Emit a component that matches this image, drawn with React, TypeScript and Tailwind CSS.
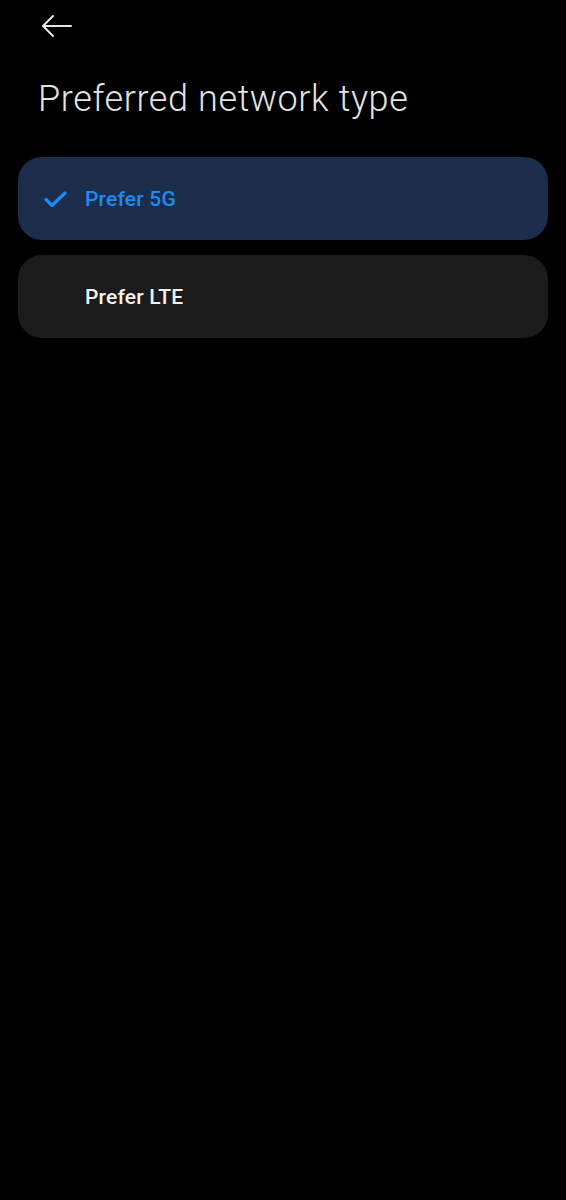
import React from "react";

export default function App() {
  return (
    <div className="min-h-[1200px] w-full bg-black" style={{ fontFamily: "Roboto, 'Noto Sans', sans-serif" }}>
      <div className="flex h-[52px] items-center pl-[41px]">
        <svg width="32" height="24" viewBox="0 0 32 24" fill="none" stroke="#e6e6e6" strokeWidth="2" strokeLinecap="round" strokeLinejoin="round">
          <path d="M30 12H3" />
          <path d="M12 2L2 12l10 10" />
        </svg>
      </div>
      <h1 className="mt-[24px] pl-[38px] text-[36px] font-light leading-[46px] tracking-[0.6px] text-[#e3e3e3]">
        Preferred network type
      </h1>
      <div className="mt-[35px] flex flex-col gap-[15px] px-[18px]">
        <div className="flex h-[83px] items-center rounded-[24px] bg-[#1b2d4a] pl-[26px] pt-[2px]">
          <svg width="23" height="17" viewBox="0 0 23 17" fill="none" stroke="#1e8bf3" strokeWidth="3.2" strokeLinecap="round" strokeLinejoin="round">
            <path d="M2 8.5l6 6L21 2" />
          </svg>
          <span className="ml-[18px] text-[21px] font-medium tracking-[0.2px] text-[#1e8bf3]">Prefer 5G</span>
        </div>
        <div className="flex h-[83px] items-center rounded-[24px] bg-[#1b1b1b] pl-[67px] pt-[2px]">
          <span className="text-[21px] font-medium tracking-[0.2px] text-[#f2f2f2]">Prefer LTE</span>
        </div>
      </div>
    </div>
  );
}
